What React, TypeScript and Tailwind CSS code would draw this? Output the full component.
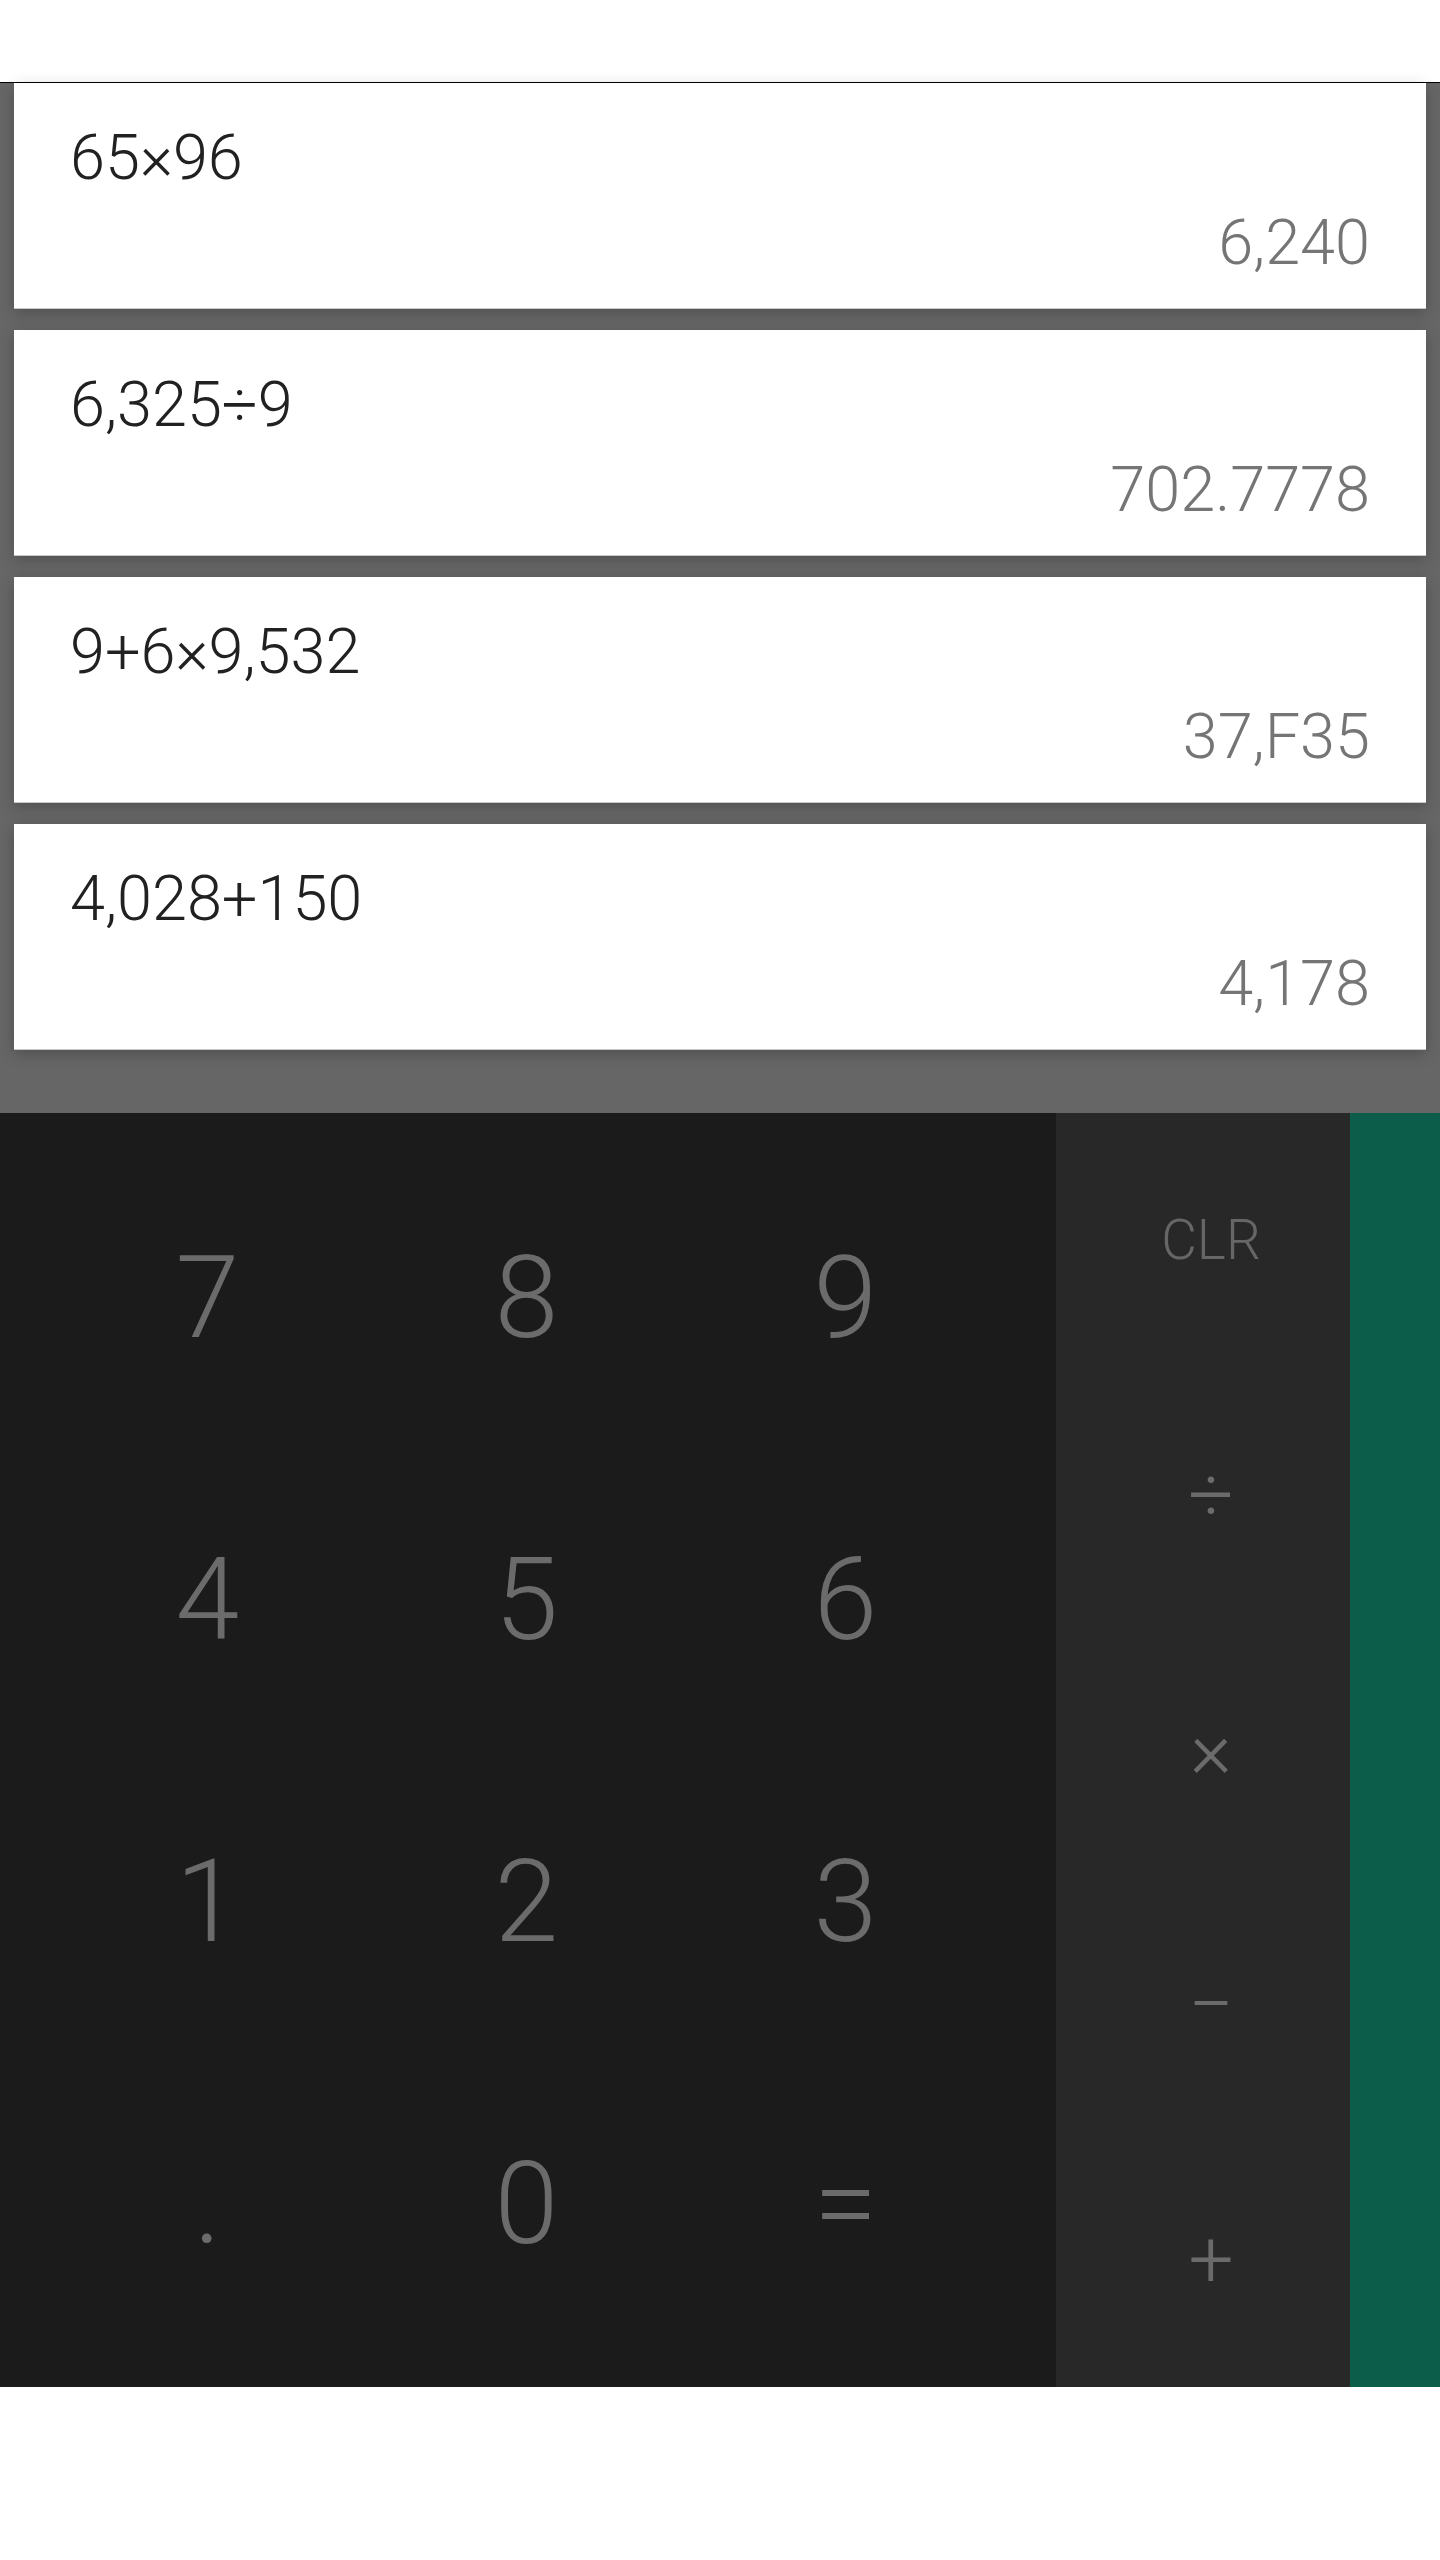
import React from "react";

const history = [
  { expr: "65×96", result: "6,240" },
  { expr: "6,325÷9", result: "702.7778" },
  { expr: "9+6×9,532", result: "37,F35" },
  { expr: "4,028+150", result: "4,178" },
];

const digits = ["7", "8", "9", "4", "5", "6", "1", "2", "3", ".", "0", "="];
const ops = ["÷", "×", "−", "+"];

export default function App() {
  return (
    <div className="w-[1440px] h-[2560px] bg-white font-['Roboto',sans-serif] overflow-hidden">
      <div className="h-[82px] bg-white" />
      <div className="h-px bg-black" />
      <div className="bg-[#666666] pl-[14px] pr-[14px] pb-[63px] flex flex-col gap-[21px]">
        {history.map((h, i) => (
          <div
            key={i}
            className="h-[226px] bg-white border-b border-[#c9c9c9] shadow-[0_4px_14px_rgba(0,0,0,0.22)] px-[56px] pt-[38px] flex flex-col"
          >
            <div className="text-[63px] leading-[74px] font-light text-[#212121]">{h.expr}</div>
            <div className="mt-[11px] text-[63px] leading-[74px] font-light text-[#757575] text-right">
              {h.result}
            </div>
          </div>
        ))}
      </div>
      <div className="h-[1274px] flex">
        <div className="w-[1056px] bg-[#1b1b1b] pl-[48px] pr-[51px] py-[33px] grid grid-cols-3 grid-rows-4">
          {digits.map((d) => (
            <div
              key={d}
              className="flex items-center justify-center text-[115px] leading-none font-light text-[#6b6b6b]"
            >
              {d}
            </div>
          ))}
        </div>
        <div className="w-[294px] bg-[#282828] pl-[16px] flex flex-col">
          <div className="flex-1 flex items-center justify-center text-[55px] leading-none font-light text-[#666666]">
            CLR
          </div>
          {ops.map((o) => (
            <div
              key={o}
              className="flex-1 flex items-center justify-center text-[80px] leading-none font-light text-[#6b6b6b]"
            >
              {o}
            </div>
          ))}
        </div>
        <div className="flex-1 bg-[#0c5e4b]" />
      </div>
    </div>
  );
}
